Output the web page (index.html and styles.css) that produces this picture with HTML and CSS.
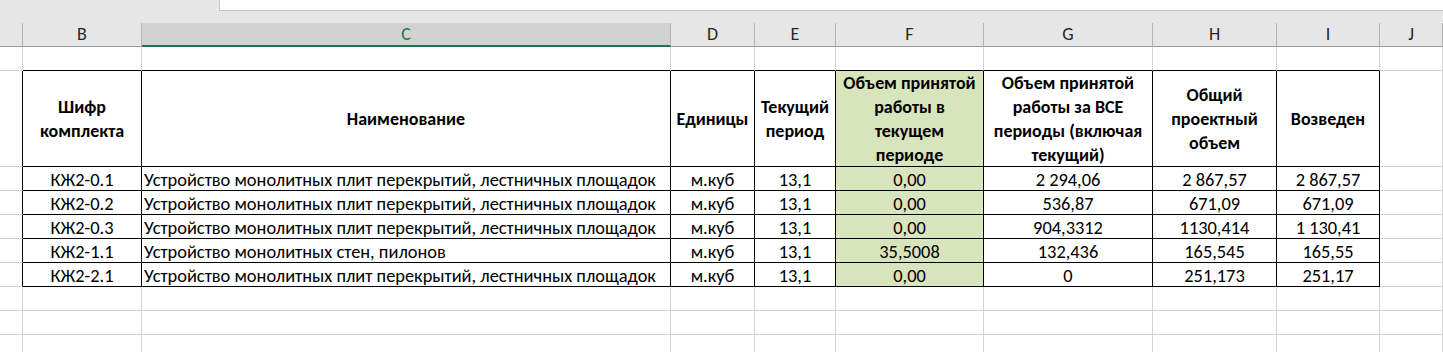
FILE: index.html
```html
<!DOCTYPE html>
<html lang="ru">
<head>
<meta charset="utf-8">
<title>Лист</title>
<link rel="stylesheet" href="styles.css">
</head>
<body>
<div class="topbar">
  <div class="topbar-gap"></div>
  <div class="formula-box"></div>
</div>
<div class="sheet">
  <!-- column headers -->
  <div class="ch"></div>
  <div class="ch">B</div>
  <div class="ch ch-sel">C</div>
  <div class="ch">D</div>
  <div class="ch">E</div>
  <div class="ch">F</div>
  <div class="ch">G</div>
  <div class="ch">H</div>
  <div class="ch">I</div>
  <div class="ch">J</div>

  <!-- row above table -->
  <div class="c"></div>
  <div class="c above"></div>
  <div class="c above"></div>
  <div class="c above"></div>
  <div class="c above"></div>
  <div class="c above"></div>
  <div class="c above"></div>
  <div class="c above"></div>
  <div class="c above"></div>
  <div class="c"></div>

  <!-- table header -->
  <div class="c left-of"></div>
  <div class="t th">Шифр<br>комплекта</div>
  <div class="t th">Наименование</div>
  <div class="t th">Единицы</div>
  <div class="t th">Текущий<br>период</div>
  <div class="t th green">Объем принятой<br>работы в<br>текущем<br>периоде</div>
  <div class="t th">Объем принятой<br>работы за ВСЕ<br>периоды (включая<br>текущий)</div>
  <div class="t th">Общий<br>проектный<br>объем</div>
  <div class="t th">Возведен</div>
  <div class="c"></div>

  <!-- data rows -->
  <div class="c left-of"></div>
  <div class="t td">КЖ2-0.1</div>
  <div class="t td td-left">Устройство монолитных плит перекрытий, лестничных площадок</div>
  <div class="t td">м.куб</div>
  <div class="t td">13,1</div>
  <div class="t td green">0,00</div>
  <div class="t td">2 294,06</div>
  <div class="t td">2 867,57</div>
  <div class="t td">2 867,57</div>
  <div class="c"></div>

  <div class="c left-of"></div>
  <div class="t td">КЖ2-0.2</div>
  <div class="t td td-left">Устройство монолитных плит перекрытий, лестничных площадок</div>
  <div class="t td">м.куб</div>
  <div class="t td">13,1</div>
  <div class="t td green">0,00</div>
  <div class="t td">536,87</div>
  <div class="t td">671,09</div>
  <div class="t td">671,09</div>
  <div class="c"></div>

  <div class="c left-of"></div>
  <div class="t td">КЖ2-0.3</div>
  <div class="t td td-left">Устройство монолитных плит перекрытий, лестничных площадок</div>
  <div class="t td">м.куб</div>
  <div class="t td">13,1</div>
  <div class="t td green">0,00</div>
  <div class="t td">904,3312</div>
  <div class="t td">1130,414</div>
  <div class="t td">1 130,41</div>
  <div class="c"></div>

  <div class="c left-of"></div>
  <div class="t td">КЖ2-1.1</div>
  <div class="t td td-left">Устройство монолитных стен, пилонов</div>
  <div class="t td">м.куб</div>
  <div class="t td">13,1</div>
  <div class="t td green">35,5008</div>
  <div class="t td">132,436</div>
  <div class="t td">165,545</div>
  <div class="t td">165,55</div>
  <div class="c"></div>

  <div class="c left-of"></div>
  <div class="t td">КЖ2-2.1</div>
  <div class="t td td-left">Устройство монолитных плит перекрытий, лестничных площадок</div>
  <div class="t td">м.куб</div>
  <div class="t td">13,1</div>
  <div class="t td green">0,00</div>
  <div class="t td">0</div>
  <div class="t td">251,173</div>
  <div class="t td">251,17</div>
  <div class="c"></div>

  <!-- empty rows -->
  <div class="c"></div><div class="c"></div><div class="c"></div><div class="c"></div><div class="c"></div>
  <div class="c"></div><div class="c"></div><div class="c"></div><div class="c"></div><div class="c"></div>
  <div class="c"></div><div class="c"></div><div class="c"></div><div class="c"></div><div class="c"></div>
  <div class="c"></div><div class="c"></div><div class="c"></div><div class="c"></div><div class="c"></div>
  <div class="c"></div><div class="c"></div><div class="c"></div><div class="c"></div><div class="c"></div>
  <div class="c"></div><div class="c"></div><div class="c"></div><div class="c"></div><div class="c"></div>
</div>
</body>
</html>
```

FILE: styles.css
```css
* {
  box-sizing: border-box;
}

html, body {
  margin: 0;
  padding: 0;
  background: #ffffff;
  overflow: hidden;
}

body {
  font-family: "Carlito", "Lato", "Liberation Sans", sans-serif;
  font-size: 18px;
  color: #000;
}

.topbar {
  display: flex;
  height: 23px;
  background: #e6e6e6;
}

.topbar-gap {
  width: 219px;
  flex: none;
}

.formula-box {
  flex: 1;
  height: 11px;
  background: #ffffff;
  border-left: 1px solid #c6c6c6;
  border-bottom: 1px solid #c6c6c6;
}

.sheet {
  display: grid;
  grid-template-columns: 23px 119px 529px 84px 81px 148px 169px 124px 103px 1fr;
  grid-template-rows: 24px 24px 96px repeat(5, 24px) 24px 24px 24px;
}

.ch {
  background: #e6e6e6;
  border-right: 1px solid #b4b4b4;
  border-bottom: 1px solid #9b9b9b;
  color: #262626;
  font-size: 18px;
  line-height: 23px;
  text-align: center;
}

.ch-sel {
  background: #d2d2d2;
  color: #217346;
  border-bottom: 2px solid #217346;
}

.c {
  border-right: 1px solid #d4d4d4;
  border-bottom: 1px solid #d4d4d4;
}

.c.above {
  border-bottom-color: #000;
}

.c.left-of {
  border-right-color: #000;
}

.t {
  border-right: 1px solid #000;
  border-bottom: 1px solid #000;
  overflow: hidden;
  white-space: nowrap;
}

.th {
  display: flex;
  align-items: center;
  justify-content: center;
  text-align: center;
  font-weight: bold;
  line-height: 24px;
}

.td {
  text-align: center;
  font-size: 18.4px;
  line-height: 23px;
  padding-top: 1px;
}

.td-left {
  text-align: left;
  padding-left: 2px;
}

.green {
  background: #d8e4bc;
}
```
